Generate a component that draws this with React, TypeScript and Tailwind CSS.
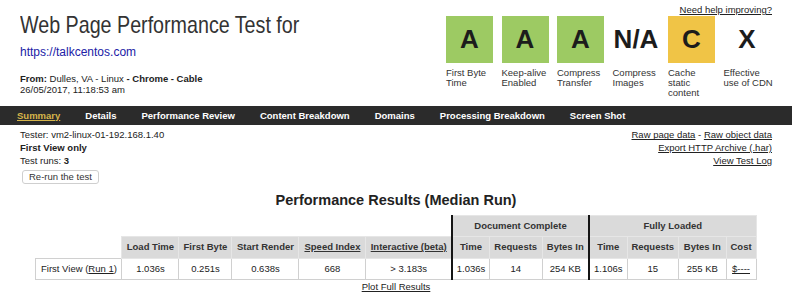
const grades = [
  { grade: 'A', label: 'First Byte Time', bg: 'bg-[#9dca63]' },
  { grade: 'A', label: 'Keep-alive Enabled', bg: 'bg-[#9dca63]' },
  { grade: 'A', label: 'Compress Transfer', bg: 'bg-[#9dca63]' },
  { grade: 'N/A', label: 'Compress Images', bg: '' },
  { grade: 'C', label: 'Cache static content', bg: 'bg-[#f0c446]' },
  { grade: 'X', label: 'Effective use of CDN', bg: '' },
];

const tabs = [
  'Summary',
  'Details',
  'Performance Review',
  'Content Breakdown',
  'Domains',
  'Processing Breakdown',
  'Screen Shot',
];

const colWidths = [86, 57, 53, 67, 67, 86, 37.5, 52.5, 47, 38, 51.5, 47.5, 30];

const head = 'bg-[#dadada] border border-[#e6e6e6] font-bold text-[#333] text-center px-0';
const cell = 'border border-[#d0d0d0] text-center text-[#222] font-normal px-0';
const thick = 'border-l-2 border-l-[#151515]';

export default function App() {
  return (
    <div className="w-[792px] h-[300px] bg-white text-[#222] text-[9.5px] font-['Liberation_Sans',Arial,sans-serif] overflow-hidden">
      {/* Header */}
      <div className="flex justify-between items-start px-[20px]">
        <div className="pt-[10.7px]">
          <h1 className="text-[24px] leading-[28px] text-[#333] whitespace-nowrap origin-left scale-x-[0.82]">
            Web Page Performance Test for
          </h1>
          <a className="block mt-[6.6px] text-[12px] leading-[14px] text-[#2121a6]">https://talkcentos.com</a>
          <div className="mt-[14.2px] leading-[11px]">
            <b>From:</b> Dulles, VA - Linux <b>- Chrome - Cable</b>
          </div>
          <div className="leading-[11px]">26/05/2017, 11:18:53 am</div>
        </div>

        <div className="flex flex-col items-end pt-[4px]">
          <a className="leading-[11px] underline">Need help improving?</a>
          <div className="flex gap-[8.5px] mt-[1px] mr-[1.5px]">
            {grades.map((g, i) => (
              <div key={i} className="w-[47px]">
                <div
                  className={`w-[47px] h-[47px] flex items-center justify-center text-[26px] font-bold text-[#1c1c1c] ${g.bg}`}
                >
                  {g.grade}
                </div>
                <div className="w-[50px] mt-[4.5px] leading-[10.3px] text-[#333]">{g.label}</div>
              </div>
            ))}
          </div>
        </div>
      </div>

      {/* Nav */}
      <div className="mt-[7.6px] h-[19.5px] bg-[#2b2b2b] flex items-center pl-[4.5px]">
        {tabs.map((t, i) => (
          <a
            key={t}
            className={`px-[12.5px] font-bold ${i === 0 ? 'text-[#d6b54a] underline' : 'text-white'}`}
          >
            {t}
          </a>
        ))}
      </div>

      {/* Test info */}
      <div className="flex justify-between items-start px-[20px] pt-[4px]">
        <div className="leading-[12.8px]">
          <div>Tester: vm2-linux-01-192.168.1.40</div>
          <div className="font-bold">First View only</div>
          <div>
            Test runs: <b>3</b>
          </div>
          <button className="mt-[2.6px] ml-[2px] h-[13.5px] px-[6px] flex items-center border border-[#cfcfcf] rounded-[3px] bg-white text-[#333] leading-none">
            Re-run the test
          </button>
        </div>
        <div className="leading-[12.8px] text-right">
          <div>
            <a className="underline">Raw page data</a> - <a className="underline">Raw object data</a>
          </div>
          <div>
            <a className="underline">Export HTTP Archive (.har)</a>
          </div>
          <div>
            <a className="underline">View Test Log</a>
          </div>
        </div>
      </div>

      {/* Results */}
      <h2 className="mt-[8.3px] text-center text-[14.5px] leading-[17px] font-bold text-[#222]">
        Performance Results (Median Run)
      </h2>
      <table className="mt-[6px] mx-auto w-[720px] table-fixed border-collapse">
        <colgroup>
          {colWidths.map((w, i) => (
            <col key={i} style={{ width: w }} />
          ))}
        </colgroup>
        <thead>
          <tr className="h-[21px]">
            <th colSpan={6}></th>
            <th colSpan={3} className={`${head} ${thick}`}>
              Document Complete
            </th>
            <th colSpan={4} className={`${head} ${thick}`}>
              Fully Loaded
            </th>
          </tr>
          <tr className="h-[21.5px]">
            <th></th>
            <th className={head}>Load Time</th>
            <th className={head}>First Byte</th>
            <th className={head}>Start Render</th>
            <th className={head}>
              <span className="underline">Speed Index</span>
            </th>
            <th className={head}>
              <span className="underline">Interactive (beta)</span>
            </th>
            <th className={`${head} ${thick}`}>Time</th>
            <th className={head}>Requests</th>
            <th className={head}>Bytes In</th>
            <th className={`${head} ${thick}`}>Time</th>
            <th className={head}>Requests</th>
            <th className={head}>Bytes In</th>
            <th className={head}>Cost</th>
          </tr>
        </thead>
        <tbody>
          <tr className="h-[21px]">
            <td className={cell}>
              First View (<span className="underline">Run 1</span>)
            </td>
            <td className={cell}>1.036s</td>
            <td className={cell}>0.251s</td>
            <td className={cell}>0.638s</td>
            <td className={cell}>668</td>
            <td className={cell}>&gt; 3.183s</td>
            <td className={`${cell} ${thick}`}>1.036s</td>
            <td className={cell}>14</td>
            <td className={cell}>254 KB</td>
            <td className={`${cell} ${thick}`}>1.106s</td>
            <td className={cell}>15</td>
            <td className={cell}>255 KB</td>
            <td className={cell}>
              <span className="underline">$----</span>
            </td>
          </tr>
        </tbody>
      </table>
      <div className="mt-[1px] text-center leading-[11px]">
        <a className="underline">Plot Full Results</a>
      </div>
    </div>
  );
}
